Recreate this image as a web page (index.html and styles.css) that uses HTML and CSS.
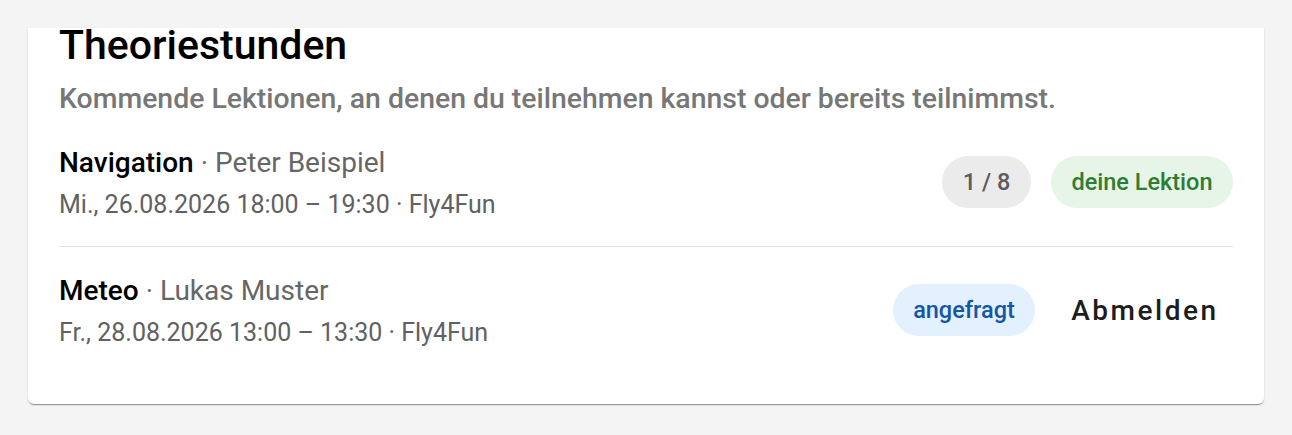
FILE: index.html
```html
<!DOCTYPE html>
<html lang="de">
<head>
<meta charset="utf-8">
<link rel="stylesheet" href="styles.css">
</head>
<body>
<div class="page">
  <section class="card">
    <h2 class="title">Theoriestunden</h2>
    <p class="subtitle">Kommende Lektionen, an denen du teilnehmen kannst oder bereits teilnimmst.</p>
    <ul class="list">
      <li class="row">
        <div class="info">
          <div class="line1"><span class="topic">Navigation</span> · Peter Beispiel</div>
          <div class="line2">Mi., 26.08.2026 18:00 – 19:30 · Fly4Fun</div>
        </div>
        <div class="actions">
          <span class="chip chip-grey">1 / 8</span>
          <span class="chip chip-green">deine Lektion</span>
        </div>
      </li>
      <li class="row">
        <div class="info">
          <div class="line1"><span class="topic">Meteo</span> · Lukas Muster</div>
          <div class="line2">Fr., 28.08.2026 13:00 – 13:30 · Fly4Fun</div>
        </div>
        <div class="actions">
          <span class="chip chip-blue">angefragt</span>
          <button class="btn">Abmelden</button>
        </div>
      </li>
    </ul>
  </section>
</div>
</body>
</html>
```

FILE: styles.css
```css
* { box-sizing: border-box; }
html, body { margin: 0; padding: 0; }
body {
  background: #f4f4f4;
  font-family: Roboto, "Liberation Sans", Arial, sans-serif;
  color: #000;
  height: 435px;
  overflow: hidden;
}
.page {
  padding: 0 28px;
}
.card {
  margin-top: 28px;
  background: #fff;
  border-radius: 0 0 6px 6px;
  box-shadow: 0 2px 1px -1px rgba(0,0,0,0.28), 0 1px 1px 0 rgba(0,0,0,0.14), 0 1px 3px 0 rgba(0,0,0,0.08);
  padding: 0 31px 30px 31px;
}
.title {
  margin: 0;
  font-size: 41px;
  font-weight: 500;
  line-height: 34px;
}
.subtitle {
  margin: 17px 0 0 0;
  font-size: 28.4px;
  font-weight: 500;
  color: #777;
  line-height: 40px;
}
.list {
  list-style: none;
  margin: 0;
  padding: 0;
}
.row {
  display: flex;
  align-items: center;
  justify-content: space-between;
  padding: 23px 0 24px;
}
.row + .row {
  border-top: 1px solid #e3e3e3;
}
.line1 {
  font-size: 28px;
  line-height: 42px;
  color: #666;
}
.topic {
  color: #000;
  font-weight: 500;
}
.line2 {
  font-size: 25px;
  line-height: 35px;
  color: #616161;
  margin-top: 3px;
}
.actions {
  display: flex;
  align-items: center;
  gap: 20px;
}
.chip {
  display: inline-flex;
  align-items: center;
  height: 52px;
  padding: 0 20.5px;
  border-radius: 26px;
  font-size: 23.5px;
  font-weight: 500;
}
.chip-grey { background: #ebebeb; color: #5c5c5c; }
.chip-green { background: #e7f4e8; color: #2e7d32; }
.chip-blue { background: #e3f0fd; color: #1456a8; }
.btn {
  border: 0;
  background: transparent;
  font-family: inherit;
  font-size: 28px;
  font-weight: 500;
  letter-spacing: 2.5px;
  color: #1d1d1d;
  padding: 8px 14.5px 8px 16px;
  cursor: pointer;
}
```
